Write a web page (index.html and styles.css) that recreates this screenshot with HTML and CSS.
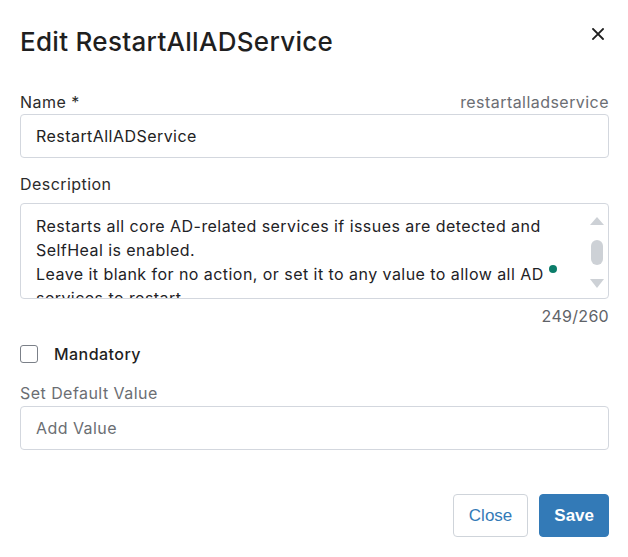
FILE: index.html
```html
<!DOCTYPE html>
<html lang="en">
<head>
<meta charset="utf-8">
<title>Edit RestartAllADService</title>
<link rel="stylesheet" href="styles.css">
</head>
<body>
<div class="dialog">
  <div class="header">
    <h2 class="title">Edit RestartAllADService</h2>
    <button class="close-x" aria-label="Close">
      <svg width="12" height="12" viewBox="0 0 12 12"><path d="M1 1 L11 11 M11 1 L1 11" stroke="#1f1f1f" stroke-width="1.8" stroke-linecap="square" fill="none"/></svg>
    </button>
  </div>

  <div class="field name-field">
    <div class="label-row">
      <span class="label">Name *</span>
      <span class="slug">restartalladservice</span>
    </div>
    <div class="input">RestartAllADService</div>
  </div>

  <div class="field desc-field">
    <div class="label desc-label">Description</div>
    <div class="textarea">
      <div class="textarea-text">Restarts all core AD-related services if issues are detected and SelfHeal is enabled.<br>Leave it blank for no action, or set it to any value to allow all AD services to restart.</div>
      <span class="dot"></span>
      <div class="scrollbar">
        <span class="arrow up"></span>
        <span class="thumb"></span>
        <span class="arrow down"></span>
      </div>
    </div>
    <div class="counter">249/260</div>
  </div>

  <label class="check-row">
    <span class="checkbox"></span>
    <span class="check-label">Mandatory</span>
  </label>

  <div class="field default-field">
    <div class="label muted">Set Default Value</div>
    <div class="input placeholder">Add Value</div>
  </div>

  <div class="footer">
    <button class="btn btn-default">Close</button>
    <button class="btn btn-primary">Save</button>
  </div>
</div>
</body>
</html>
```

FILE: styles.css
```css
* { box-sizing: border-box; }
html, body { margin: 0; padding: 0; background: #ffffff; }
body {
  font-family: Inter, "Noto Sans", sans-serif;
  font-size: 16px;
  line-height: 24px;
  letter-spacing: 0.45px;
  color: #262626;
}
.dialog {
  width: 628px;
  padding: 26px 19px 20px 20px;
}
.header {
  display: flex;
  justify-content: space-between;
  align-items: flex-start;
}
.title {
  margin: 0;
  font-size: 26px;
  line-height: 32px;
  font-weight: 500;
  letter-spacing: 0.3px;
  color: #1f1f1f;
}
.close-x {
  border: 0;
  background: none;
  padding: 0;
  margin: 2px 5px 0 0;
  width: 12px;
  height: 12px;
  display: flex;
}
.field { display: flex; flex-direction: column; }
.name-field { margin-top: 32px; }
.label-row {
  display: flex;
  justify-content: space-between;
}
.label { color: #2b2b2b; }
.slug { color: #6b6e73; }
.muted { color: #6b6e73; }
.input {
  height: 44px;
  border: 1px solid #d3d7de;
  border-radius: 4px;
  padding: 9px 15px;
  color: #222222;
}
.placeholder { color: #6b6e73; }
.desc-field { margin-top: 14px; }
.desc-label { margin-bottom: 7px; }
.textarea {
  position: relative;
  height: 96px;
  border: 1px solid #d3d7de;
  border-radius: 4px;
  padding: 10px 48px 0 15px;
  overflow: hidden;
  color: #1e2226;
}
.dot {
  position: absolute;
  left: 528px;
  top: 61px;
  width: 8px;
  height: 8px;
  border-radius: 50%;
  background: #0b7d6a;
}
.scrollbar {
  position: absolute;
  right: 5px;
  top: 13px;
  width: 13px;
  bottom: 10px;
  display: flex;
  flex-direction: column;
  align-items: center;
  justify-content: space-between;
}
.arrow {
  width: 0;
  height: 0;
  border-left: 7px solid transparent;
  border-right: 7px solid transparent;
}
.arrow.up { border-bottom: 8px solid #cdd1d6; }
.arrow.down { border-top: 9px solid #cdd1d6; }
.thumb {
  width: 12px;
  height: 25px;
  border-radius: 6px;
  background: #cdd1d6;
}
.counter {
  margin-top: 5px;
  text-align: right;
  color: #5f6368;
  letter-spacing: 0.3px;
}
.check-row {
  margin-top: 14px;
  display: flex;
  align-items: center;
  gap: 16px;
}
.checkbox {
  width: 18px;
  height: 18px;
  border: 1px solid #7b8088;
  border-radius: 3px;
  background: #ffffff;
}
.check-label {
  font-weight: 500;
  color: #1f1f1f;
}
.default-field { margin-top: 15px; }
.default-field .label { margin-bottom: 1px; }
.footer {
  margin-top: 44px;
  display: flex;
  justify-content: flex-end;
  gap: 11px;
}
.btn {
  height: 43px;
  border-radius: 4px;
  font-family: "Liberation Sans", Arial, sans-serif;
  font-size: 17px;
  letter-spacing: 0;
  padding: 0 15px;
  cursor: pointer;
}
.btn-default {
  background: #ffffff;
  border: 1px solid #cfd4da;
  color: #337ab7;
}
.btn-primary {
  background: #337ab7;
  border: 1px solid #337ab7;
  color: #ffffff;
  font-weight: bold;
  padding: 0 14px;
}
```
